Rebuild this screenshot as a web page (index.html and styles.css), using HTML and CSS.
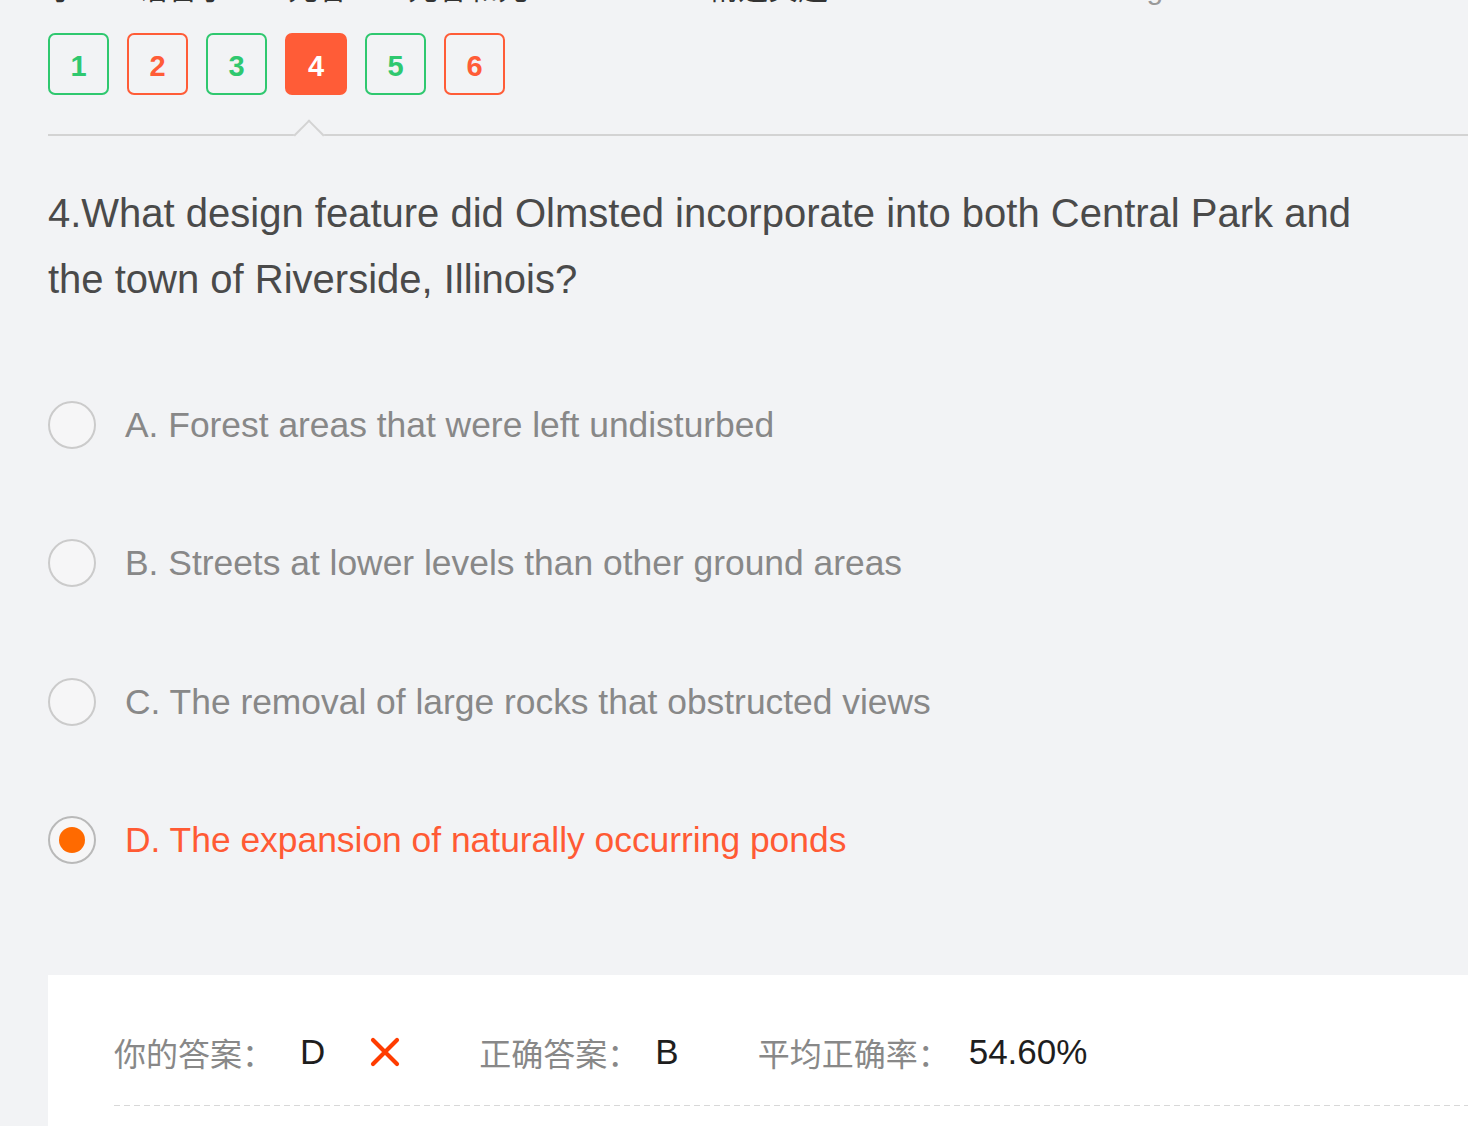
FILE: index.html
```html
<!DOCTYPE html>
<html lang="zh">
<head>
<meta charset="utf-8">
<title>Question 4</title>
<link rel="stylesheet" href="styles.css">
</head>
<body>
<div class="page">
  <div class="crumbs">
    <div class="crumbs-inner">
      <span class="c-dark">子</span><span class="c-dark">语言子</span><span class="c-dark">元谷</span><span class="c-dark">元谷和元</span><span class="c-gray">3 · 3</span><span class="c-dark">精选真题</span><span class="c-gray">3 · 3 · 3</span><span class="c-gray">Reading Practice</span>
    </div>
  </div>

  <nav class="qnav">
    <span class="qbox right">1</span>
    <span class="qbox wrong">2</span>
    <span class="qbox right">3</span>
    <span class="qbox current">4</span>
    <span class="qbox right">5</span>
    <span class="qbox wrong">6</span>
  </nav>

  <div class="divider"><span class="caret"></span></div>

  <h1 class="question">4.What design feature did Olmsted incorporate into both Central Park and the town of Riverside, Illinois?</h1>

  <ul class="options">
    <li class="option"><span class="radio"></span><span class="opt-text">A. Forest areas that were left undisturbed</span></li>
    <li class="option"><span class="radio"></span><span class="opt-text">B. Streets at lower levels than other ground areas</span></li>
    <li class="option"><span class="radio"></span><span class="opt-text">C. The removal of large rocks that obstructed views</span></li>
    <li class="option chosen"><span class="radio"><span class="dot"></span></span><span class="opt-text">D. The expansion of naturally occurring ponds</span></li>
  </ul>

  <section class="result">
    <div class="result-row">
      <span class="label">你的答案：</span><span class="value v-mine">D</span>
      <svg class="cross" width="30" height="30" viewBox="0 0 30 30" aria-hidden="true"><path d="M3 3 L27 27 M27 3 L3 27" stroke="#ff3c00" stroke-width="4.2" stroke-linecap="round" fill="none"/></svg>
      <span class="label l-correct">正确答案：</span><span class="value v-correct">B</span>
      <span class="label l-avg">平均正确率：</span><span class="value v-avg">54.60%</span>
    </div>
    <div class="dash"></div>
  </section>
</div>
</body>
</html>
```

FILE: styles.css
```css
html, body {
  margin: 0;
  padding: 0;
  background: #f2f3f5;
  overflow: hidden;
}

body {
  font-family: "Liberation Sans", Arial, "Noto Sans CJK SC", sans-serif;
}

.page {
  padding-left: 48px;
  width: 1420px;
}

.crumbs {
  height: 6px;
  overflow: hidden;
}

.crumbs-inner {
  margin-top: -27px;
  font-size: 30px;
  line-height: 32px;
  white-space: nowrap;
  font-family: "Liberation Sans", "Noto Sans CJK SC", sans-serif;
}

.crumbs-inner span {
  margin-right: 60px;
}

.c-dark { color: #333; }
.c-gray { color: #999; }

.qnav {
  display: flex;
  gap: 18px;
  margin-top: 27px;
}

.qbox {
  box-sizing: border-box;
  width: 61px;
  height: 62px;
  padding-top: 4px;
  border: 2px solid;
  border-radius: 7px;
  display: flex;
  align-items: center;
  justify-content: center;
  font-size: 29px;
  font-weight: bold;
}

.qbox.right {
  border-color: #2fc86f;
  color: #2fc86f;
}

.qbox.wrong {
  border-color: #ff5c37;
  color: #ff5c37;
}

.qbox.current {
  border-color: #ff5c37;
  background: #ff5c37;
  color: #fff;
  width: 62px;
}

.divider {
  position: relative;
  margin-top: 39px;
  border-top: 2px solid #d3d3d3;
  height: 0;
}

.caret {
  position: absolute;
  box-sizing: border-box;
  left: 250px;
  top: -12.5px;
  width: 22px;
  height: 22px;
  background: #f2f3f5;
  border-top: 2px solid #d3d3d3;
  border-left: 2px solid #d3d3d3;
  transform: rotate(45deg);
}

.question {
  margin: 44px 0 0 0;
  width: 1340px;
  font-size: 40px;
  line-height: 66px;
  font-weight: normal;
  color: #4a4a4a;
}

.options {
  list-style: none;
  margin: 44px 0 0 0;
  padding: 0;
}

.option {
  height: 138.3px;
  display: flex;
  align-items: center;
}

.radio {
  box-sizing: border-box;
  width: 48px;
  height: 48px;
  border-radius: 50%;
  border: 2px solid #cbcbcb;
  background: #f6f6f7;
  display: flex;
  align-items: center;
  justify-content: center;
  flex: none;
}

.chosen .radio {
  border-color: #b9b9b9;
}

.dot {
  width: 26px;
  height: 26px;
  border-radius: 50%;
  background: #ff6a00;
}

.opt-text {
  margin-left: 29px;
  font-size: 35.4px;
  line-height: 48px;
  color: #888;
}

.chosen .opt-text {
  color: #ff5a34;
}

.result {
  margin-top: 66px;
  background: #fff;
  padding: 53px 0 0 66px;
  min-height: 200px;
}

.result-row {
  display: flex;
  align-items: center;
  height: 48px;
  font-size: 32px;
  line-height: 48px;
}

.label {
  color: #888;
  font-family: "Noto Sans CJK SC", sans-serif;
}

.value {
  color: #1e1e1e;
  font-size: 35px;
  font-family: "Liberation Sans", Arial, sans-serif;
}

.v-mine { margin-left: 26px; }

.cross {
  margin-left: 45px;
  flex: none;
}

.l-correct { margin-left: 79px; }
.v-correct { margin-left: 16px; }
.l-avg { margin-left: 79px; }
.v-avg { margin-left: 19px; }

.dash {
  margin-top: 29px;
  height: 1px;
  background: repeating-linear-gradient(to right, #d8d8d8 0 6px, transparent 6px 10px);
}
```
